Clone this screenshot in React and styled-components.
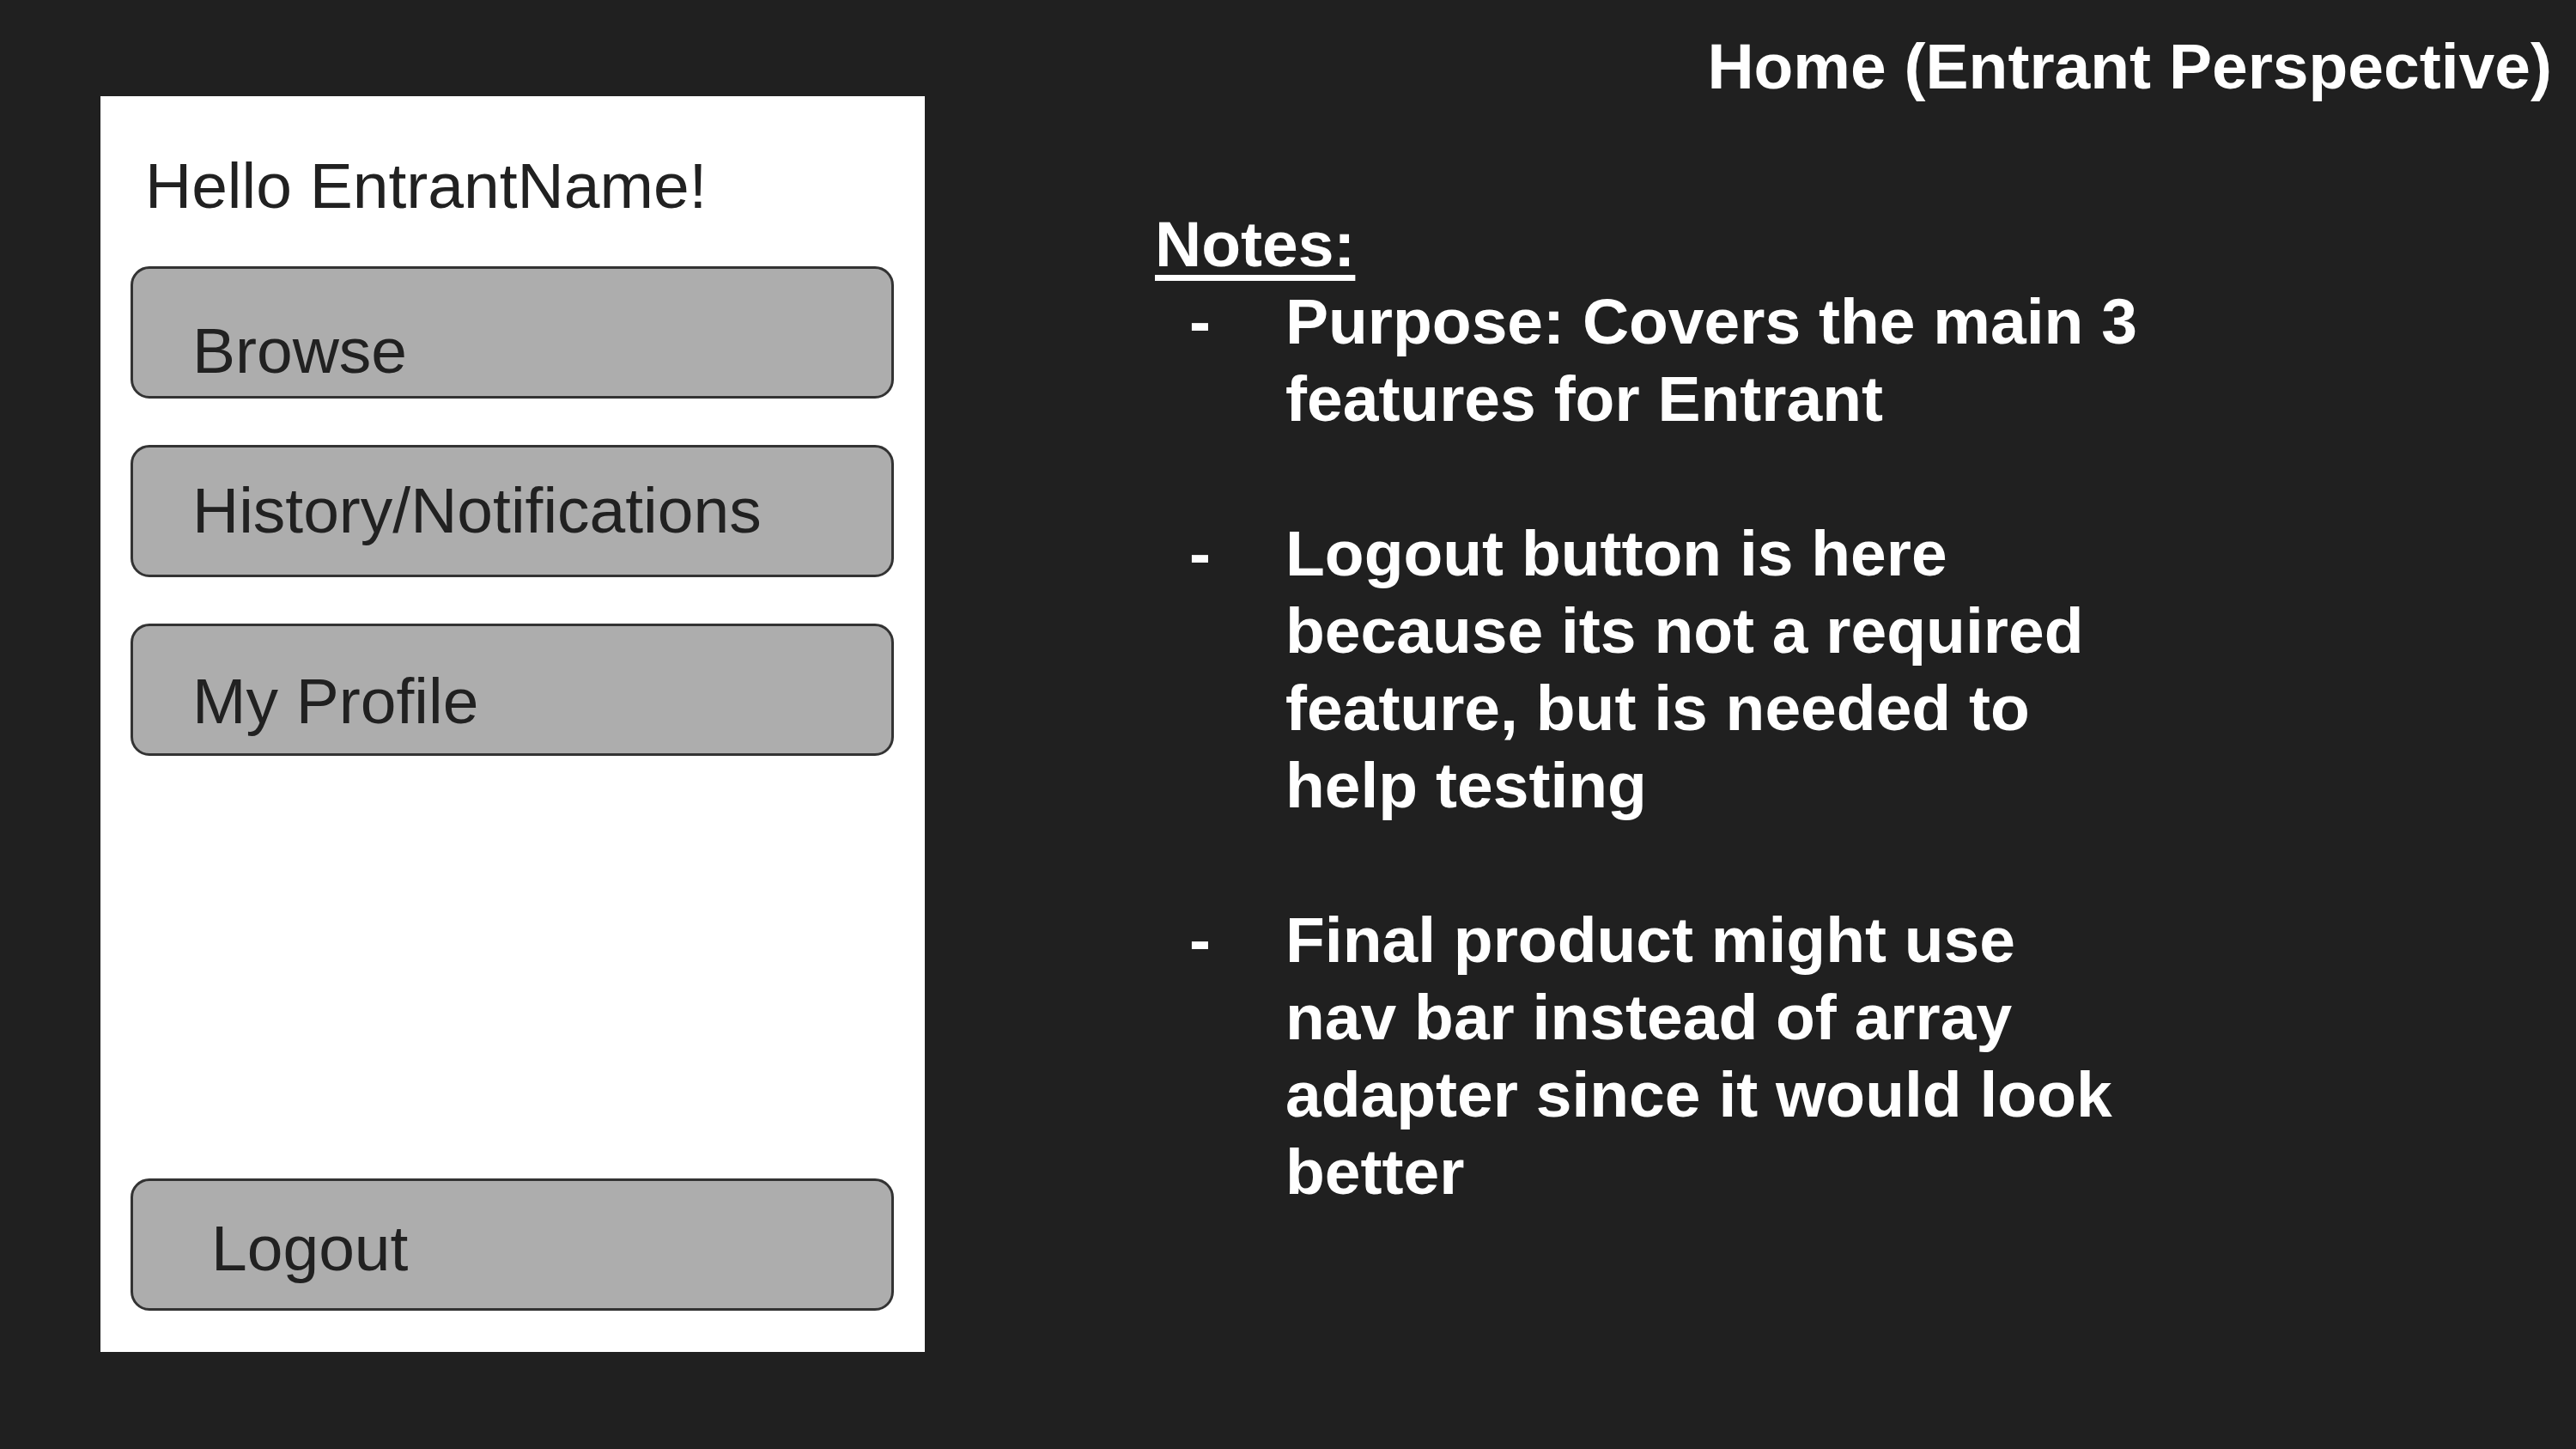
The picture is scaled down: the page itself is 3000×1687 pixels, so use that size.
import styled, { createGlobalStyle } from "styled-components";

const GlobalStyle = createGlobalStyle`
  html, body {
    margin: 0;
    padding: 0;
    background-color: #202020;
  }
  * {
    box-sizing: border-box;
  }
`;

const Page = styled.div`
  width: 3000px;
  height: 1687px;
  background-color: #202020;
  font-family: "Liberation Sans", Arial, sans-serif;
  display: flex;
  flex-direction: column;
  overflow: hidden;
`;

const SlideTitle = styled.h1`
  margin: 42px 28px 0 0;
  align-self: flex-end;
  font-size: 75px;
  line-height: 70px;
  font-weight: 700;
  color: #ffffff;
`;

const Body = styled.div`
  display: flex;
  align-items: flex-start;
  padding-left: 117px;
`;

const Phone = styled.div`
  width: 960px;
  height: 1462px;
  background-color: #ffffff;
  padding: 67px 36px 48px 35px;
  display: flex;
  flex-direction: column;
`;

const Greeting = styled.div`
  padding-left: 17px;
  font-size: 75px;
  line-height: 1;
  color: #212121;
  margin-bottom: 56px;
`;

const MenuList = styled.div`
  display: flex;
  flex-direction: column;
  gap: 54px;
`;

const MenuButton = styled.div`
  height: 154px;
  background-color: #adadad;
  border: 3px solid #333333;
  border-radius: 22px;
  padding: ${(p) => p.$top}px 0 0 ${(p) => p.$left}px;
  font-size: 75px;
  line-height: 1;
  color: #212121;
  white-space: nowrap;
`;

const LogoutButton = styled(MenuButton)`
  margin-top: auto;
`;

const Notes = styled.div`
  margin: 127px 0 0 268px;
  color: #ffffff;
  font-size: 75px;
  line-height: 90px;
  font-weight: 700;
`;

const NotesHeading = styled.div`
  text-decoration: underline;
  text-decoration-thickness: 7px;
  text-underline-offset: 10px;
  width: fit-content;
`;

const NoteItem = styled.div`
  display: grid;
  grid-template-columns: 112px auto;
  padding-left: 40px;
  margin-top: ${(p) => (p.$first ? 0 : 90)}px;
  white-space: nowrap;
`;

const Dash = styled.span``;

const notes = [
  ["Purpose: Covers the main 3", "features for Entrant"],
  [
    "Logout button is here",
    "because its not a required",
    "feature, but is needed to",
    "help testing",
  ],
  [
    "Final product might use",
    "nav bar instead of array",
    "adapter since it would look",
    "better",
  ],
];

const menu = [
  { label: "Browse", top: 58 },
  { label: "History/Notifications", top: 36 },
  { label: "My Profile", top: 50 },
];

const App = () => {
  return (
    <Page>
      <GlobalStyle />
      <SlideTitle>Home (Entrant Perspective)</SlideTitle>
      <Body>
        <Phone>
          <Greeting>Hello EntrantName!</Greeting>
          <MenuList>
            {menu.map((m) => (
              <MenuButton key={m.label} $top={m.top} $left={69}>
                {m.label}
              </MenuButton>
            ))}
          </MenuList>
          <LogoutButton $top={41} $left={91}>
            Logout
          </LogoutButton>
        </Phone>
        <Notes>
          <NotesHeading>Notes:</NotesHeading>
          {notes.map((lines, i) => (
            <NoteItem key={i} $first={i === 0}>
              <Dash>-</Dash>
              <div>
                {lines.map((line) => (
                  <div key={line}>{line}</div>
                ))}
              </div>
            </NoteItem>
          ))}
        </Notes>
      </Body>
    </Page>
  );
};

export default App;
